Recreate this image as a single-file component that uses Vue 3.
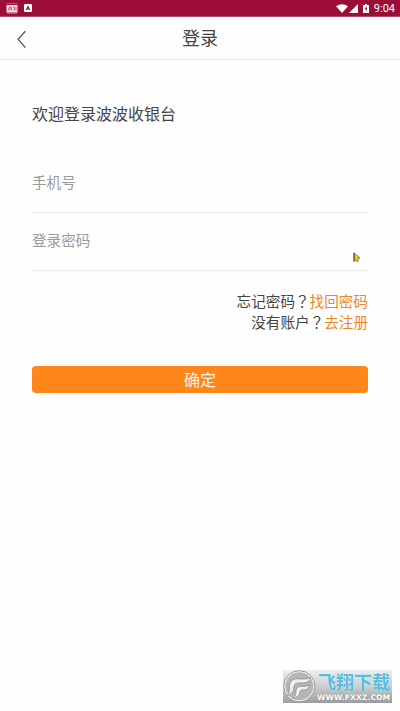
<script setup>
const fields = [
  { label: '手机号', type: 'tel' },
  { label: '登录密码', type: 'password' },
]
const links = [
  { question: '忘记密码', action: '找回密码' },
  { question: '没有账户', action: '去注册' },
]
</script>

<template>
  <div class="screen">
    <div class="status">
      <svg class="note" width="12" height="11" viewBox="0 0 12 11">
        <path d="M0.5 0.5h11" stroke="#b95876" />
        <rect x="0.5" y="2" width="11" height="7.5" fill="#f8e4ea" />
        <path d="M2 7.5l2-4v4M5.5 4v3.5M7 4h1.5v3H7M10 3.5v4" fill="none" stroke="#b53b5f" stroke-width=".8" />
        <path d="M1 10.5h10" stroke="#b95876" />
      </svg>
      <svg class="app" width="8" height="8" viewBox="0 0 8 8">
        <rect width="8" height="8" rx="1" fill="#fff" />
        <path d="M2.3 6L4 2.6 5.7 6M3 5h2" fill="none" stroke="#7d1c3c" stroke-width="1.1" />
      </svg>
      <span class="space"></span>
      <svg class="wifi" width="12" height="9" viewBox="0 0 12 9">
        <path d="M0 2.3Q6-1.8 12 2.3L6 9z" fill="#fff" />
      </svg>
      <svg class="signal" width="9" height="9" viewBox="0 0 9 9"><path d="M9 0v9H0z" fill="#fff" /></svg>
      <svg class="battery" width="6" height="9" viewBox="0 0 6 9">
        <path d="M2 0h2v1h2v8H0V1h2z" fill="#fff" />
        <path d="M3.6 2.1L1.7 5h1v2.4L4.5 4.4h-1z" fill="#9b0d37" />
      </svg>
      <span class="time">9:04</span>
    </div>

    <header class="header">
      <svg class="back" width="10" height="19" viewBox="0 0 10 19">
        <path d="M8.4 1.2L1.2 9.3l7.2 8.4" fill="none" stroke="#484848" stroke-width="1.2" />
      </svg>
      <h1>登录</h1>
    </header>

    <main class="content">
      <p class="welcome">欢迎登录波波收银台</p>
      <div v-for="field in fields" :key="field.label" class="field">{{ field.label }}</div>
      <div class="links">
        <div v-for="link in links" :key="link.action">{{ link.question }}<span class="mark" lang="zh-TW">？</span><a>{{ link.action }}</a></div>
      </div>
      <button class="submit" type="button">确定</button>
    </main>

    <svg class="cursor" width="8" height="11" viewBox="0 0 8 11">
      <path d="M1 .8v8.8l1.9-1.8 1.3 2 1.2-.7-.9-2.2 2.6-.9z" fill="#e6c53d" stroke="#776023" stroke-width=".7" />
      <path d="M1 1v8.3" stroke="#40351f" stroke-width=".9" />
    </svg>

    <div class="watermark">
      <svg class="logo" width="33" height="33" viewBox="0 0 33 33">
        <circle cx="16.3" cy="16.3" r="15.6" fill="#f4f4f4" stroke="#96989a" stroke-width="1" />
        <circle cx="16.3" cy="16.3" r="14" fill="#b4b6b7" />
        <g fill="#f0f0f0" stroke="#85888a" stroke-width=".8" stroke-linejoin="round">
          <path d="M4.5 25.5C8 21 4.6 15.5 8 11.2c2.5-3.4 7-2 11.5-2.2 3 0 5.7-.4 8.3-1.2-1 3.8-4 5-8 5.2-4 0-7.3-.5-8.5 2.3-1 3 .2 7.9-6.8 10.2z" />
          <path d="M9.5 28.5c5-3.6 2.4-7 4.1-10 1.6-2.4 4.2-2 7.2-2.2 2.3 0 3.6-.4 5.6-1.3-.5 3.9-2.8 4.8-6 4.9-2.3 0-3.1.4-3.5 2.3-.6 3-2.6 5.6-7.4 6.3z" />
        </g>
      </svg>
      <div class="brand">
        <span class="name">飞翔下载</span>
        <span class="site">WWW.FXXZ.COM</span>
      </div>
    </div>
  </div>
</template>

<style>
body {
  margin: 0;
  background: #fefefe;
}
</style>

<style scoped>
.screen {
  position: relative;
  width: 400px;
  height: 711px;
  overflow: hidden;
  background: #fefefe;
  color: #444;
  font-family: "Noto Sans CJK SC", sans-serif;
}

.status {
  display: flex;
  align-items: center;
  box-sizing: border-box;
  height: 17px;
  padding: 0 5px 0 6px;
  border-bottom: 1px solid #b24a69;
  background: #9b0d37;
  background-clip: padding-box;
}

.app { margin-left: 6px; }
.space { flex: 1; }
.signal { margin-left: 1px; }
.battery { margin: 0 5px; }

.time {
  padding-top: 2px;
  color: #fff;
  font: 11px/16px Roboto, sans-serif;
}

.header {
  display: grid;
  grid-template-columns: 32px 1fr 32px;
  align-items: center;
  box-sizing: border-box;
  height: 43px;
  border-bottom: 1px solid #e9e9e9;
}

.back { margin-left: 17px; margin-top: 2px; }

h1 {
  margin: 0;
  font-size: 18px;
  font-weight: 400;
  line-height: 40px;
  height: 42px;
  text-align: center;
}

.content { padding: 41px 32px 0; }

.welcome {
  margin: 0 0 42px;
  font-size: 16px;
  line-height: 24px;
}

.field {
  box-sizing: border-box;
  height: 58px;
  padding-top: 4px;
  border-bottom: 1px solid #ebebeb;
  color: #999;
  font-size: 14.6px;
  line-height: 22px;
}

.field:first-of-type { height: 46px; }
.field + .field { padding-top: 16px; }

.links {
  padding-top: 19px;
  font-size: 14.6px;
  line-height: 21px;
  text-align: right;
}

.mark { font-family: "Noto Sans CJK TC", sans-serif; }
.links a { color: #ee8622; }

.submit {
  display: block;
  width: 100%;
  height: 27px;
  margin-top: 34px;
  padding: 0;
  border: 0;
  border-radius: 4px;
  background: #ff861b;
  color: #fff5e6;
  font: 16px/27px "Noto Sans CJK SC", sans-serif;
}

.cursor {
  position: absolute;
  left: 353px;
  top: 252px;
}

.watermark {
  position: absolute;
  left: 283px;
  top: 670px;
  display: flex;
  width: 109px;
  height: 33px;
  background: linear-gradient(#ededed, #cdcece 50%, #9c9d9e);
}

.logo { flex: none; }

.brand {
  display: flex;
  flex-direction: column;
}

.name {
  height: 23px;
  margin-left: 2px;
  color: #52bfe2;
  font-size: 18px;
  font-weight: 700;
  line-height: 23px;
  white-space: nowrap;
  text-shadow: 0 0 1px #fff;
}

.site {
  margin-left: 1px;
  color: #fff;
  font: 700 7.6px/9px "DejaVu Sans", sans-serif;
  letter-spacing: .08px;
  white-space: nowrap;
  text-shadow: 0 0 1px #77797b;
}
</style>
